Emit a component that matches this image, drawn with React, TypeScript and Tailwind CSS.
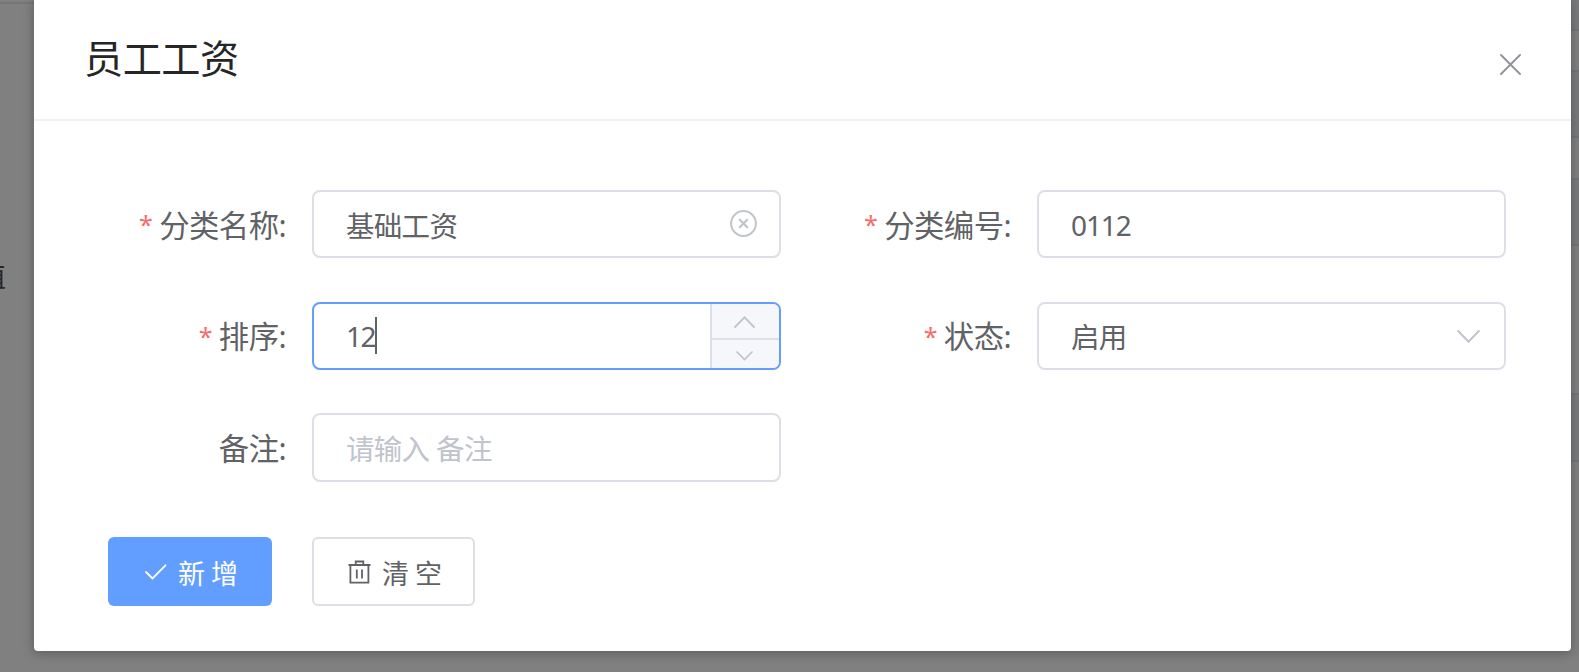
import React from 'react';
import clsx from 'clsx';

interface FormItemProps {
  label: string;
  required?: boolean;
  active?: boolean;
  children: React.ReactNode;
}

const FormItem: React.FC<FormItemProps> = ({ label, required, active, children }) => (
  <div className="flex h-full w-[673px]">
    <div className="flex w-[178px] items-center justify-end pt-[4px] text-[30.4px] leading-none tracking-[-0.6px] text-[#606266]">
      {required && <span className="mr-[7px] mb-[3px] text-[25px] text-[#f56c6c]">*</span>}
      <span>{label}</span>
      <span>:</span>
    </div>
    <div
      className={clsx(
        'ml-[26px] flex w-[469px] items-center overflow-hidden rounded-[8px] border-2 pl-[32px] text-[28.5px] leading-none tracking-[-0.7px] text-[#606266]',
        active ? 'border-[#629eff]' : 'border-[#dcdfe6]'
      )}
    >
      {children}
    </div>
  </div>
);

// Table rows behind the mask, only their right edge is visible
const maskRows = [
  'h-[31px] bg-[#7a7b7d]',
  'h-[41px] bg-[#808080]',
  'h-[66px] bg-[#7a7b7d]',
  'h-[42px] bg-[#808080]',
  'h-[66px] bg-[#7a7b7d]',
  'h-[149px] bg-[#808080]',
  'h-[67px] bg-[#7a7b7d]',
];

export default function App() {
  return (
    <div className="flex h-[672px] w-[1579px] overflow-hidden bg-[#808080] font-['Noto_Sans','Noto_Sans_CJK_SC',sans-serif]">
      {/* Page behind the mask, left */}
      <div className="flex w-[34px] shrink-0 flex-col overflow-hidden">
        <div className="mt-[2px] h-[2px] bg-[#75757c]" />
        <div className="mt-[257px] flex w-[6px] justify-end overflow-hidden text-[28px] leading-[30px] text-[#252627]">
          <span>值</span>
        </div>
      </div>

      {/* Dialog */}
      <div className="z-10 -mt-[3px] flex h-[654px] w-[1537px] shrink-0 flex-col rounded-[4px] bg-white pt-[3px] shadow-[0_2px_12px_rgba(0,0,0,0.3)]">
        <div className="flex h-[121px] items-center justify-between border-b-2 border-[#f0f0f0] pr-[50px] pl-[50px]">
          <h1 className="mb-[3px] text-[39.2px] leading-none tracking-[-0.5px] text-[#262626]">员工工资</h1>
          <svg className="mt-[9px] h-[21px] w-[21px]" viewBox="0 0 21 21" fill="none" stroke="#909399" strokeWidth="1.9" strokeLinecap="round">
            <path d="M1 1l19 19M20 1L1 20" />
          </svg>
        </div>

        <div className="mt-[69px] ml-[74px] grid grid-cols-[725px_673px] grid-rows-[68px_68px_69px] gap-y-[43.5px]">
          <FormItem label="分类名称" required>
            <span className="grow pt-[4px]">基础工资</span>
            <svg className="mr-[22px] mb-px h-[27px] w-[27px]" viewBox="0 0 27 27" fill="none" stroke="#c0c4cc" strokeWidth="2" strokeLinecap="round">
              <circle cx="13.5" cy="13.5" r="12.4" />
              <path d="M9.8 9.8l7.4 7.4M17.2 9.8l-7.4 7.4" strokeWidth="2.2" />
            </svg>
          </FormItem>
          <FormItem label="分类编号" required>
            <span className="pt-[2px] text-[28px] tracking-[-1.1px]">0112</span>
          </FormItem>
          <FormItem label="排序" required active>
            <span className="text-[28px] tracking-[-1.4px]">12</span>
            <span className="h-[37px] w-[2px] bg-[#606266]" />
            <div className="ml-auto flex h-full w-[69px] flex-col border-l-2 border-[#dcdfe6] bg-[#f5f7fa]">
              <div className="flex h-[36px] items-center justify-center border-b-2 border-[#dcdfe6] pt-[2px] pr-[2px]">
                <svg className="h-[12px] w-[21px]" viewBox="0 0 21 12" fill="none" stroke="#c0c4cc" strokeWidth="1.8" strokeLinecap="round">
                  <path d="M1 11l9.5-9.7L20 11" />
                </svg>
              </div>
              <div className="flex grow items-center justify-center pt-[4px] pr-[2px]">
                <svg className="h-[10px] w-[17px]" viewBox="0 0 17 10" fill="none" stroke="#c0c4cc" strokeWidth="1.7" strokeLinecap="round">
                  <path d="M1 1l7.5 7.5L16 1" />
                </svg>
              </div>
            </div>
          </FormItem>
          <FormItem label="状态" required>
            <span className="grow pt-[3px]">启用</span>
            <svg className="mt-px mr-[24px] h-[13px] w-[23px]" viewBox="0 0 23 13" fill="none" stroke="#c0c4cc" strokeWidth="2" strokeLinecap="round">
              <path d="M1.2 1l10.3 10.7L21.8 1" />
            </svg>
          </FormItem>
          <FormItem label="备注">
            <span className="pt-[4px] text-[#c0c4cc]">请输入 备注</span>
          </FormItem>
        </div>

        <div className="mt-[55px] ml-[74px] flex gap-[40px]">
          <button className="flex h-[69px] w-[164px] items-center rounded-[6px] bg-[#629eff] pl-[37px] text-[27px] leading-none tracking-[6px] text-white">
            <svg className="mt-px mr-[11px] h-[16px] w-[22px]" viewBox="0 0 22 16" fill="none" stroke="currentColor" strokeWidth="1.8" strokeLinecap="round">
              <path d="M1 8l6.5 6.5L20.5 1.3" />
            </svg>
            <span className="pt-[3px]">新增</span>
          </button>
          <button className="flex h-[69px] w-[163px] items-center rounded-[6px] border-2 border-[#dcdfe6] bg-white pl-[34px] text-[27px] leading-none tracking-[6px] text-[#606266]">
            <svg className="mr-[11px] h-[24px] w-[23px]" viewBox="0 0 23 24" fill="none" stroke="currentColor" strokeWidth="1.8">
              <path d="M0.5 5h22M7.7 5V1.5h7.6V5M2.4 5v17.7h18V5M8.8 9.5v9M14 9.5v9" />
            </svg>
            <span className="pt-[3px]">清空</span>
          </button>
        </div>
      </div>

      {/* Page behind the mask, right */}
      <div className="w-[8px] shrink-0">
        {maskRows.map((row, index) => (
          <div key={index} className={clsx('border-b-2 border-[#747579]', row)} />
        ))}
      </div>
    </div>
  );
}
